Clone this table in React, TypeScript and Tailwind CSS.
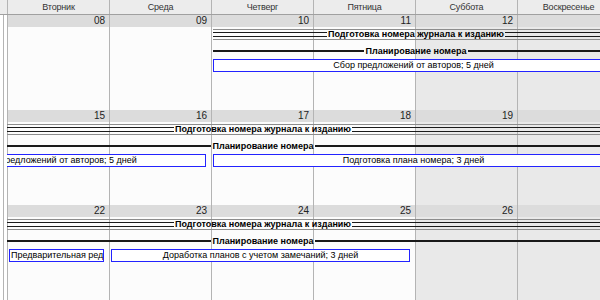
import React from "react";

type Bar = {
  kind: "summary" | "line" | "task";
  label: string;
  col: string; // grid-column classes, written in full
  align?: "left";
};

type Week = {
  dates: string[];
  bars: Bar[];
};

const DAYS = [
  "Понедельник",
  "Вторник",
  "Среда",
  "Четверг",
  "Пятница",
  "Суббота",
  "Воскресенье",
];

const COLS = [
  "col-start-1",
  "col-start-2",
  "col-start-3",
  "col-start-4",
  "col-start-5",
  "col-start-6",
  "col-start-7",
];

const WEEKS: Week[] = [
  {
    dates: ["07", "08", "09", "10", "11", "12", "13"],
    bars: [
      { kind: "summary", label: "Подготовка номера журнала к изданию", col: "col-start-4 col-span-4" },
      { kind: "line", label: "Планирование номера", col: "col-start-4 col-span-4" },
      { kind: "task", label: "Сбор предложений от авторов; 5 дней", col: "col-start-4 col-span-4" },
    ],
  },
  {
    dates: ["14", "15", "16", "17", "18", "19", "20"],
    bars: [
      { kind: "summary", label: "Подготовка номера журнала к изданию", col: "col-start-1 col-span-7" },
      { kind: "line", label: "Планирование номера", col: "col-start-1 col-span-7" },
      { kind: "task", label: "Сбор предложений от авторов; 5 дней", col: "col-start-1 col-span-3" },
      { kind: "task", label: "Подготовка плана номера; 3 дней", col: "col-start-4 col-span-4" },
    ],
  },
  {
    dates: ["21", "22", "23", "24", "25", "26", "27"],
    bars: [
      { kind: "summary", label: "Подготовка номера журнала к изданию", col: "col-start-1 col-span-7" },
      { kind: "line", label: "Планирование номера", col: "col-start-1 col-span-7" },
      { kind: "task", label: "Предварительная редактура; 1 день", col: "col-start-2 col-span-1", align: "left" },
      { kind: "task", label: "Доработка планов с учетом замечаний; 3 дней", col: "col-start-3 col-span-3" },
    ],
  },
];

/* ─── полосы ─── */
const SummaryBar = ({ bar }: { bar: Bar }) => (
  <div className={`${bar.col} row-start-2 z-10 ml-[2px] flex h-[11px] items-center overflow-hidden border-y border-[#8c8c8c]`}>
    <div className="h-[5px] flex-1 border-y border-[#1a1a1a]" />
    <span className="whitespace-nowrap px-[1px] font-bold leading-none text-black">{bar.label}</span>
    <div className="h-[5px] flex-1 border-y border-[#1a1a1a]" />
  </div>
);

const LineBar = ({ bar }: { bar: Bar }) => (
  <div className={`${bar.col} row-start-4 z-10 ml-[2px] flex h-[10px] items-center overflow-hidden`}>
    <div className="h-[2px] flex-1 bg-[#1a1a1a]" />
    <span className="whitespace-nowrap px-[1px] font-bold leading-none text-black">{bar.label}</span>
    <div className="h-[2px] flex-1 bg-[#1a1a1a]" />
  </div>
);

const TaskBar = ({ bar }: { bar: Bar }) => (
  <div
    className={`${bar.col} row-start-6 z-10 ml-[2px] mr-[5px] flex h-[13px] items-center overflow-hidden border border-[#2323ff] bg-white ${
      bar.align === "left" ? "justify-start pl-[1px]" : "justify-center"
    }`}
  >
    <span className="whitespace-nowrap leading-none text-black">{bar.label}</span>
  </div>
);

const WeekBlock = ({ week }: { week: Week }) => (
  <div className="flex flex-col">
    {/* fila de fechas */}
    <div className="grid h-[12px] grid-cols-[repeat(7,102px)] bg-[#dcdcdc]">
      {week.dates.map((d) => (
        <div key={d} className="border-l border-[#b4b4b4] pr-[4px] text-right text-[10px] leading-[12px] text-[#222]">
          {d}
        </div>
      ))}
    </div>

    {/* cuerpo de la semana */}
    <div className="grid h-[83px] grid-cols-[repeat(7,102px)] grid-rows-[2px_11px_6px_10px_3px_13px_1fr]">
      {DAYS.map((d, i) => (
        <div
          key={d}
          className={`row-span-full border-l border-[#b4b4b4] ${COLS[i]} ${
            i >= 5 ? "bg-[#e9e9e9]" : "bg-[#fcfcfc]"
          }`}
        />
      ))}
      {week.bars.map((b, i) =>
        b.kind === "summary" ? (
          <SummaryBar key={i} bar={b} />
        ) : b.kind === "line" ? (
          <LineBar key={i} bar={b} />
        ) : (
          <TaskBar key={i} bar={b} />
        )
      )}
    </div>
  </div>
);

export default function App() {
  return (
    <div className="flex h-[300px] w-[600px] overflow-hidden bg-white font-['Liberation_Sans',Arial,sans-serif] text-[9px]">
      {/* margen izquierdo */}
      <div className="flex h-full w-[7px] shrink-0 flex-col">
        <div className="h-[15px] border-b border-[#a0a0a0] bg-[#ececec]" />
        <div className="ml-[3px] w-px flex-1 bg-[#b4b4b4]" />
      </div>

      {/* calendario */}
      <div className="flex-1 overflow-hidden">
        <div className="ml-[-102px] flex w-[714px] flex-col">
          <div className="grid h-[15px] grid-cols-[repeat(7,102px)] border-b border-[#a0a0a0] bg-[#ececec]">
            {DAYS.map((d) => (
              <div key={d} className="border-l border-[#b4b4b4] text-center text-[9px] leading-[14px] tracking-[-0.2px] text-[#333]">
                {d}
              </div>
            ))}
          </div>
          {WEEKS.map((w, i) => (
            <WeekBlock key={i} week={w} />
          ))}
        </div>
      </div>
    </div>
  );
}
